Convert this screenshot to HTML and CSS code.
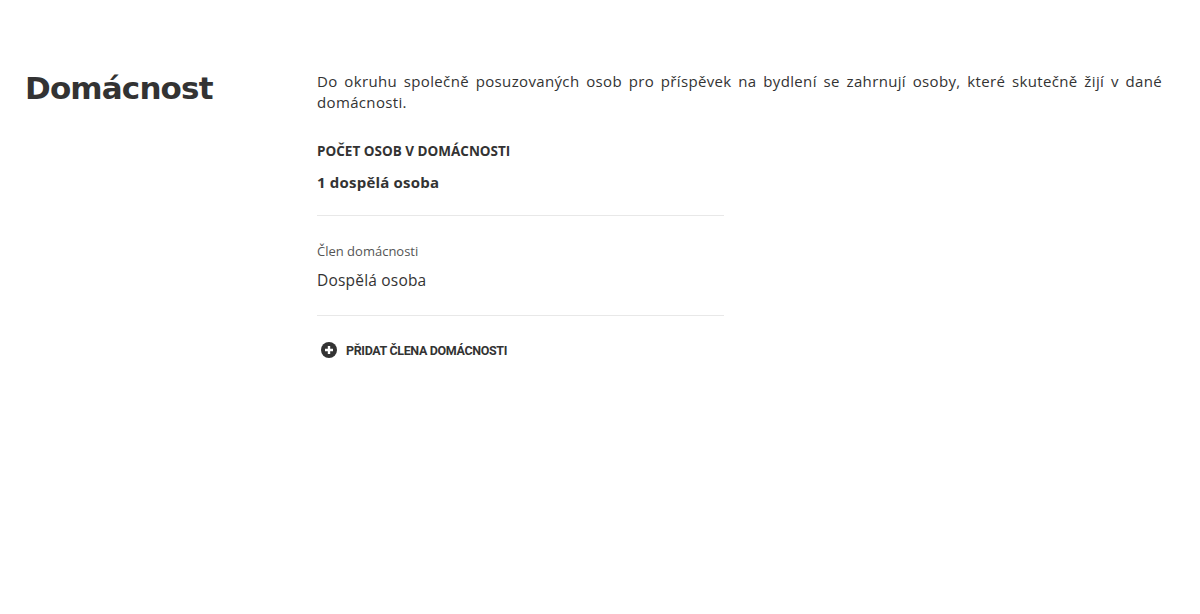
FILE: index.html
```html
<!DOCTYPE html>
<html lang="cs">
<head>
  <meta charset="UTF-8" />
  <meta name="viewport" content="width=device-width, initial-scale=1.0"/>
  <title>Domácnost</title>
  <link rel="stylesheet" href="styles.css">
</head>
<body>
  <div class="section">
    <div class="side">
      <h1 class="title">Domácnost</h1>
    </div>
    <div class="main">
      <p class="intro">Do okruhu společně posuzovaných osob pro příspěvek na bydlení se zahrnují osoby, které skutečně žijí v dané domácnosti.</p>

      <div class="summary">
        <div class="label">Počet osob v domácnosti</div>
        <div class="value">1 dospělá osoba</div>
      </div>

      <div class="member">
        <div class="member-label">Člen domácnosti</div>
        <div class="member-value">Dospělá osoba</div>
      </div>

      <button class="add-btn">
        <svg width="16" height="16" viewBox="0 0 16 16">
          <circle cx="8" cy="8" r="8" fill="#333"/>
          <path d="M8 4v8M4 8h8" stroke="#fff" stroke-width="2.4"/>
        </svg>
        <span>Přidat člena domácnosti</span>
      </button>
    </div>
  </div>
</body>
</html>
```

FILE: styles.css
```css
body {
  margin: 0;
  background: #fff;
  color: #333;
  font-family: 'Open Sans', sans-serif;
}

.section {
  display: flex;
  padding: 68px 38px 0 25px;
}

.side {
  width: 292px;
  flex-shrink: 0;
}

.title {
  margin: 0;
  font-family: 'DejaVu Sans', Verdana, sans-serif;
  font-size: 31px;
  font-weight: bold;
  line-height: 40px;
  color: #333;
  letter-spacing: -0.85px;
}

.main {
  flex: 1;
}

.intro {
  margin: 3px 0 0;
  font-size: 15px;
  line-height: 21px;
  text-align: justify;
  letter-spacing: 0.35px;
  color: #333;
}

.summary {
  width: 407px;
  padding: 28px 0 23px;
  border-bottom: 1px solid #e8e8e8;
}

.label {
  font-size: 13.5px;
  font-weight: bold;
  text-transform: uppercase;
  line-height: 20px;
}

.value {
  margin-top: 11px;
  font-size: 15px;
  font-weight: bold;
  line-height: 20px;
  letter-spacing: 0.2px;
}

.member {
  width: 407px;
  padding: 26px 0 24px;
  border-bottom: 1px solid #e8e8e8;
}

.member-label {
  font-size: 13px;
  color: #555;
  line-height: 18px;
}

.member-value {
  margin-top: 9px;
  font-size: 15.5px;
  line-height: 22px;
  letter-spacing: 0.2px;
}

.add-btn {
  display: flex;
  align-items: center;
  gap: 9px;
  margin-top: 26px;
  padding: 0 0 0 4px;
  border: none;
  background: none;
  cursor: pointer;
  font-family: 'Roboto', sans-serif;
  font-size: 12.5px;
  font-weight: bold;
  text-transform: uppercase;
  letter-spacing: -0.35px;
  color: #333;
}
```
